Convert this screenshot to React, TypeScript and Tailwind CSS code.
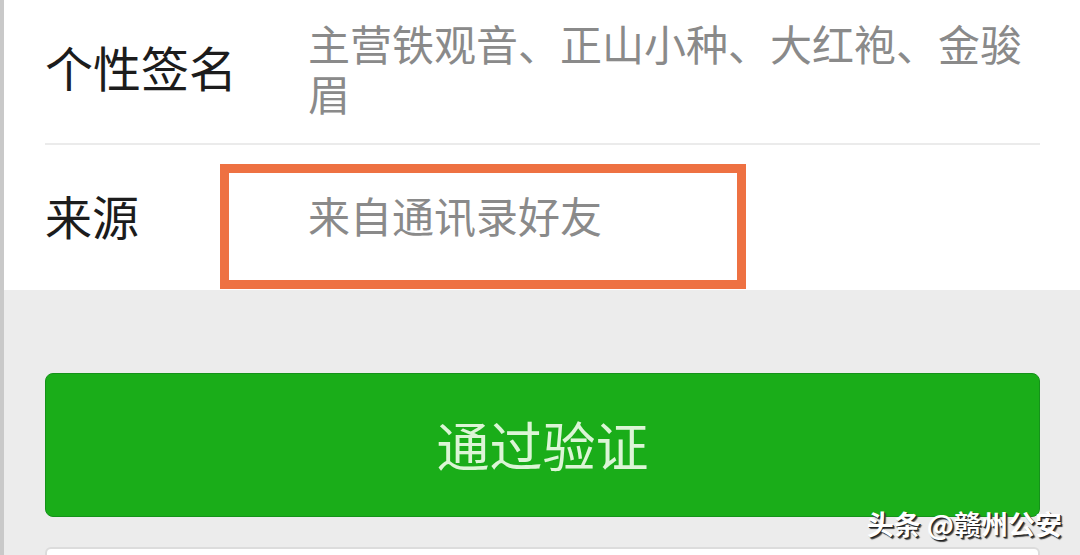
export default function App() {
  const font = { fontFamily: '"Noto Sans CJK SC", "Noto Sans", sans-serif' };
  return (
    <div
      className="relative w-[1080px] h-[555px] overflow-hidden bg-[#ececec] border-l-4 border-[#c9c9c9] flex flex-col"
      style={font}
    >
      <div className="bg-white h-[290px] flex flex-col shrink-0">
        <div className="ml-[41px] mr-[40px] h-[145px] border-b-2 border-[#ebebeb] flex items-start pt-[18px]">
          <div className="w-[263px] shrink-0 mt-[23px] text-[48px] leading-[50px] text-[#1c1c1c]">
            个性签名
          </div>
          <div className="text-[42px] leading-[50px] text-[#8a8a8a] w-[725px]">
            主营铁观音、正山小种、大红袍、金骏眉
          </div>
        </div>
        <div className="ml-[41px] flex items-start pt-[19px]">
          <div className="w-[175px] shrink-0 h-[125px] flex items-center pb-[22px] text-[47px] text-[#1c1c1c]">
            来源
          </div>
          <div className="w-[526px] h-[125px] border-[9px] border-[#ee7142] flex items-center pl-[79px] pb-[24px] text-[42px] text-[#8a8a8a]">
            来自通讯录好友
          </div>
        </div>
      </div>
      <div className="ml-[41px] mr-[40px] mt-[83px] h-[144px] rounded-[8px] bg-[#1aad19] border border-[#15921a] flex items-center justify-center text-[53px] text-[#dcf5d6] shrink-0">
        通过验证
      </div>
      <div className="ml-[41px] mr-[40px] mt-[30px] h-[40px] rounded-[6px] bg-white border-2 border-[#dcdcdc] shrink-0" />
      <div
        className="absolute right-[18px] bottom-[18px] text-[27px] font-bold text-white leading-none"
        style={{ textShadow: '1px 1px 0 #222, 2px 2px 1px #444' }}
      >
        头条 @赣州公安
      </div>
    </div>
  );
}
